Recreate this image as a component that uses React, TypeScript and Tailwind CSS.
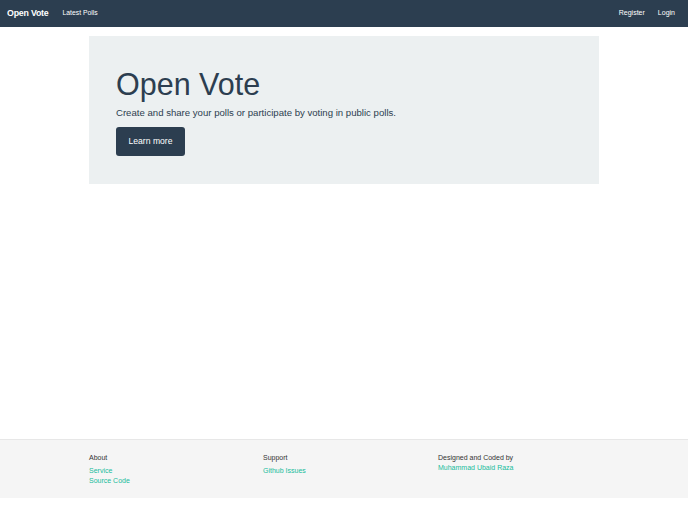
const FONT = "font-['Liberation_Sans','Helvetica_Neue',Arial,sans-serif]"

function Navbar() {
  return (
    <nav className="h-[27px] bg-[#2c3e50] flex items-center px-[7px] text-white">
      <a className="text-[8.8px] font-bold tracking-[-0.2px]">Open Vote</a>
      <a className="ml-[14px] text-[6.8px]">Latest Polls</a>
      <div className="ml-auto flex items-center gap-[13px] pr-[6px] text-[7px]">
        <a>Register</a>
        <a>Login</a>
      </div>
    </nav>
  )
}

function Jumbotron() {
  return (
    <div className="bg-[#ecf0f1] px-[27px] pt-[30px] pb-[28px] text-[#2c3e50]">
      <h1 className="text-[30.5px] leading-[36px] font-light">Open Vote</h1>
      <p className="mt-[5px] text-[9.6px] leading-[12px] font-light">
        Create and share your polls or participate by voting in public polls.
      </p>
      <button className="mt-[8px] w-[69px] h-[29px] rounded-[3px] bg-[#2c3e50] text-white text-[8.6px]">
        Learn more
      </button>
    </div>
  )
}

function Footer() {
  return (
    <footer className="h-[59px] bg-[#f5f5f5] border-t border-[#e7e7e7]">
      <div className="ml-[89px] grid grid-cols-[174px_175px_1fr] pt-[13px] text-[7px] leading-[10px]">
        <div>
          <div className="text-[#333]">About</div>
          <div className="mt-[3px] text-[#18bc9c]">Service</div>
          <div className="text-[#18bc9c]">Source Code</div>
        </div>
        <div>
          <div className="text-[#333]">Support</div>
          <div className="mt-[3px] text-[#18bc9c]">Github Issues</div>
        </div>
        <div>
          <div className="text-[#333]">Designed and Coded by</div>
          <div className="text-[#18bc9c]">Muhammad Ubaid Raza</div>
        </div>
      </div>
    </footer>
  )
}

export default function App() {
  return (
    <div className={`${FONT} w-[688px] h-[512px] bg-white flex flex-col`}>
      <Navbar />
      <main className="h-[412px] pt-[9px]">
        <div className="mx-auto w-[510px]">
          <Jumbotron />
        </div>
      </main>
      <Footer />
    </div>
  )
}
